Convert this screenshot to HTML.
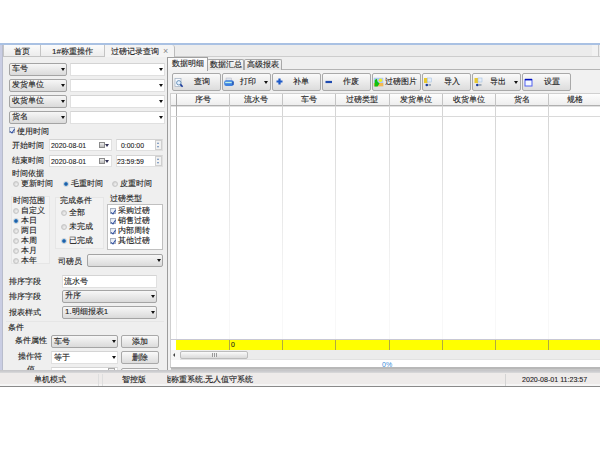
<!DOCTYPE html>
<html><head><meta charset="utf-8">
<style>
*{box-sizing:border-box;margin:0;padding:0}
html,body{width:600px;height:450px;overflow:hidden;background:#fff}
body{position:relative;font-family:"Liberation Sans",sans-serif;font-size:8px;color:#1a1a1a}
.a{position:absolute}
.t{position:absolute;white-space:nowrap;line-height:10px;font-size:8px;color:#1a1a1a;-webkit-text-stroke:0.12px #222}
.n{font-size:8px;letter-spacing:0;-webkit-text-stroke:0.1px #1a1a1a;transform:scaleX(0.86);transform-origin:0 0}
.combo{position:absolute;border:1px solid #a4a4a4;border-radius:2px;background:linear-gradient(#f7f7f7,#dadada)}
.inp{position:absolute;border:1px solid #e0e0e0;border-top-color:#d4d4d4;background:#fff}
.arr{position:absolute;width:0;height:0;border-left:2px solid transparent;border-right:2px solid transparent;border-top:3px solid #111}
.btn{position:absolute;border:1px solid #a9a9a9;border-radius:2px;background:linear-gradient(#fafafa,#dcdcdc)}
.rad{position:absolute;width:6px;height:6px;border-radius:50%;border:1px solid #c8c8c8;background:radial-gradient(circle at 60% 60%,#f0f0f0 0,#d8d8d8 2px,#c8c8c8 3px)}
.rad.on{border-color:#c8d0d8;background:radial-gradient(circle at 50% 50%,#1a4a90 0,#2a78c0 1.6px,#80b0d8 2.4px,#e0e8f0 3px)}
.chk{position:absolute;width:6px;height:6px;border:1px solid #a8b0c0;background:linear-gradient(135deg,#dfe6f2,#fafcff)}
.chk.on::after{content:"";position:absolute;left:1px;top:-0.5px;width:1.5px;height:3.5px;border-right:1px solid #3050a0;border-bottom:1px solid #3050a0;transform:rotate(35deg)}
.vl{position:absolute;width:1px;background:#b8b8b8}
.hl{position:absolute;height:1px;background:#b8b8b8}
</style></head><body>
<div class="a" style="left:0;top:43px;width:600px;height:2px;background:#a9c1e3"></div>
<div class="a" style="left:0;top:45px;width:3px;height:326px;background:linear-gradient(90deg,#c9cde3 0,#c9cde3 2px,#b8bccc 2px)"></div>
<div class="a" style="left:3px;top:45px;width:597px;height:12px;background:#ececec"></div>
<div class="a" style="left:175px;top:56px;width:425px;height:1px;background:#cdcdcd"></div>
<div class="a" style="left:592px;top:45px;width:6px;height:11px;background:#f2f2f2"></div>
<div class="a" style="left:598px;top:45px;width:1px;height:12px;background:#c8c8c8"></div>
<div class="a" style="left:3px;top:45px;width:38px;height:12px;background:linear-gradient(#fbfbfb,#ececec);border:1px solid #c4c4c4;border-top:none;border-radius:0 0 0 0"></div>
<div class="t" style="left:14px;top:47px;">首页</div>
<div class="a" style="left:41px;top:45px;width:64px;height:12px;background:linear-gradient(#fbfbfb,#ececec);border:1px solid #c4c4c4;border-top:none;border-left:none"></div>
<div class="t" style="left:52px;top:47px;">1#称重操作</div>
<div class="a" style="left:104px;top:45px;width:71px;height:13px;background:#f4f4f4;border-left:1px solid #c4c4c4;border-right:1px solid #bcbcbc;border-radius:0 3px 0 0"></div>
<div class="t" style="left:111px;top:47px;">过磅记录查询</div>
<div class="t" style="left:163px;top:46px;color:#888;font-size:9px;-webkit-text-stroke:0">×</div>
<div class="a" style="left:3px;top:57px;width:164px;height:314px;background:#efefef"></div>
<div class="a" style="left:6px;top:321px;width:158px;height:1px;background:#e6e6e6"></div>
<div class="combo" style="left:9px;top:63px;width:58px;height:13px"></div>
<div class="t" style="left:12px;top:64px;">车号</div>
<div class="arr" style="left:61px;top:68px"></div>
<div class="inp" style="left:70px;top:63px;width:95px;height:13px"></div>
<div class="arr" style="left:159px;top:68px"></div>
<div class="combo" style="left:9px;top:79px;width:58px;height:13px"></div>
<div class="t" style="left:12px;top:80px;">发货单位</div>
<div class="arr" style="left:61px;top:84px"></div>
<div class="inp" style="left:70px;top:79px;width:95px;height:13px"></div>
<div class="arr" style="left:159px;top:84px"></div>
<div class="combo" style="left:9px;top:95px;width:58px;height:13px"></div>
<div class="t" style="left:12px;top:96px;">收货单位</div>
<div class="arr" style="left:61px;top:100px"></div>
<div class="inp" style="left:70px;top:95px;width:95px;height:13px"></div>
<div class="arr" style="left:159px;top:100px"></div>
<div class="combo" style="left:9px;top:111px;width:58px;height:13px"></div>
<div class="t" style="left:12px;top:112px;">货名</div>
<div class="arr" style="left:61px;top:116px"></div>
<div class="inp" style="left:70px;top:111px;width:95px;height:13px"></div>
<div class="arr" style="left:159px;top:116px"></div>
<div class="chk on" style="left:9px;top:127px"></div>
<div class="t" style="left:17px;top:127px;">使用时间</div>
<div class="t" style="left:12px;top:141px;">开始时间</div>
<div class="inp" style="left:49px;top:139px;width:63px;height:12px"></div>
<div class="t n" style="left:51px;top:141px;">2020-08-01</div>
<div class="a" style="left:99px;top:142px;width:6px;height:6px;border:1px solid #8a8a8a;background:linear-gradient(#eee,#bbb)"></div>
<div class="arr" style="left:105px;top:144px;border-top-color:#335;border-left-width:2px;border-right-width:2px"></div>
<div class="inp" style="left:116px;top:139px;width:47px;height:12px"></div>
<div class="t n" style="left:121px;top:141px;">0:00:00</div>
<div class="a" style="left:155px;top:140px;width:7px;height:10px;background:#f2f2f2;border:1px solid #cfcfcf"></div>
<div class="arr" style="left:157px;top:146px;border-top:2px solid #6a8ab8;border-left-width:1.5px;border-right-width:1.5px"></div>
<div class="arr" style="left:157px;top:142px;border-top:none;border-bottom:2px solid #6a8ab8;border-left-width:1.5px;border-right-width:1.5px"></div>
<div class="t" style="left:12px;top:156px;">结束时间</div>
<div class="inp" style="left:49px;top:155px;width:63px;height:12px"></div>
<div class="t n" style="left:51px;top:157px;">2020-08-01</div>
<div class="a" style="left:99px;top:158px;width:6px;height:6px;border:1px solid #8a8a8a;background:linear-gradient(#eee,#bbb)"></div>
<div class="arr" style="left:105px;top:160px;border-top-color:#335;border-left-width:2px;border-right-width:2px"></div>
<div class="inp" style="left:116px;top:155px;width:47px;height:12px"></div>
<div class="t n" style="left:117px;top:157px;">23:59:59</div>
<div class="a" style="left:155px;top:156px;width:7px;height:10px;background:#f2f2f2;border:1px solid #cfcfcf"></div>
<div class="arr" style="left:157px;top:162px;border-top:2px solid #6a8ab8;border-left-width:1.5px;border-right-width:1.5px"></div>
<div class="arr" style="left:157px;top:158px;border-top:none;border-bottom:2px solid #6a8ab8;border-left-width:1.5px;border-right-width:1.5px"></div>
<div class="t" style="left:12px;top:169px;">时间依据</div>
<div class="rad" style="left:13px;top:181px"></div>
<div class="t" style="left:21px;top:179px;">更新时间</div>
<div class="rad on" style="left:63px;top:181px"></div>
<div class="t" style="left:71px;top:179px;">毛重时间</div>
<div class="rad" style="left:112px;top:181px"></div>
<div class="t" style="left:120px;top:179px;">皮重时间</div>
<div class="a" style="left:11px;top:196px;width:39px;height:68px;background:#f2f2f2;border:1px solid #e6e6e6"></div>
<div class="a" style="left:55px;top:197px;width:49px;height:52px;background:#f2f2f2;border:1px solid #e6e6e6"></div>
<div class="t" style="left:13px;top:196px;">时间范围</div>
<div class="rad" style="left:13px;top:208px"></div>
<div class="t" style="left:21px;top:206px;">自定义</div>
<div class="rad on" style="left:13px;top:218px"></div>
<div class="t" style="left:21px;top:216px;">本日</div>
<div class="rad" style="left:13px;top:228px"></div>
<div class="t" style="left:21px;top:226px;">两日</div>
<div class="rad" style="left:13px;top:238px"></div>
<div class="t" style="left:21px;top:236px;">本周</div>
<div class="rad" style="left:13px;top:248px"></div>
<div class="t" style="left:21px;top:246px;">本月</div>
<div class="rad" style="left:13px;top:258px"></div>
<div class="t" style="left:21px;top:256px;">本年</div>
<div class="t" style="left:60px;top:196px;">完成条件</div>
<div class="rad" style="left:61px;top:210px"></div>
<div class="t" style="left:69px;top:208px;">全部</div>
<div class="rad" style="left:61px;top:224px"></div>
<div class="t" style="left:69px;top:222px;">未完成</div>
<div class="rad on" style="left:61px;top:238px"></div>
<div class="t" style="left:69px;top:236px;">已完成</div>
<div class="t" style="left:110px;top:194px;">过磅类型</div>
<div class="a" style="left:107px;top:204px;width:56px;height:46px;background:#fff;border:1px solid #c0c0c0"></div>
<div class="chk on" style="left:110px;top:208px"></div>
<div class="t" style="left:118px;top:206px;">采购过磅</div>
<div class="chk on" style="left:110px;top:218px"></div>
<div class="t" style="left:118px;top:216px;">销售过磅</div>
<div class="chk on" style="left:110px;top:228px"></div>
<div class="t" style="left:118px;top:226px;">内部周转</div>
<div class="chk on" style="left:110px;top:238px"></div>
<div class="t" style="left:118px;top:236px;">其他过磅</div>
<div class="t" style="left:58px;top:257px;">司磅员</div>
<div class="combo" style="left:87px;top:254px;width:76px;height:13px"></div>
<div class="arr" style="left:157px;top:259px"></div>
<div class="t" style="left:9px;top:277px;">排序字段</div>
<div class="inp" style="left:62px;top:275px;width:95px;height:13px"></div>
<div class="t" style="left:64px;top:277px;">流水号</div>
<div class="t" style="left:9px;top:292px;">排序字段</div>
<div class="combo" style="left:62px;top:290px;width:95px;height:13px"></div>
<div class="t" style="left:65px;top:291px;">升序</div>
<div class="arr" style="left:151px;top:295px"></div>
<div class="t" style="left:9px;top:308px;">报表样式</div>
<div class="combo" style="left:62px;top:306px;width:95px;height:13px"></div>
<div class="t" style="left:65px;top:307px;">1.明细报表1</div>
<div class="arr" style="left:151px;top:311px"></div>
<div class="t" style="left:8px;top:323px;">条件</div>
<div class="t" style="left:15px;top:336px;">条件属性</div>
<div class="combo" style="left:51px;top:335px;width:67px;height:13px"></div>
<div class="arr" style="left:112px;top:340px"></div>
<div class="t" style="left:54px;top:337px;">车号</div>
<div class="btn" style="left:121px;top:335px;width:38px;height:13px"></div>
<div class="t" style="left:132px;top:337px;">添加</div>
<div class="t" style="left:18px;top:352px;">操作符</div>
<div class="inp" style="left:51px;top:351px;width:67px;height:13px"></div>
<div class="arr" style="left:112px;top:356px"></div>
<div class="t" style="left:54px;top:353px;">等于</div>
<div class="btn" style="left:121px;top:351px;width:38px;height:13px"></div>
<div class="t" style="left:132px;top:353px;">删除</div>
<div class="t" style="left:27px;top:365px;">值</div>
<div class="inp" style="left:51px;top:367px;width:67px;height:12px"></div>
<div class="a" style="left:108px;top:368px;width:7px;height:8px;border:1px solid #aaa;background:#f4f4f4"></div>
<div class="btn" style="left:121px;top:368px;width:38px;height:12px"></div>
<div class="a" style="left:167px;top:57px;width:433px;height:314px;background:#efefef"></div>
<div class="a" style="left:167px;top:69px;width:433px;height:301px;background:#f1f1f1;border-left:1px solid #9c9c9c;border-top:1px solid #b4b4b4"></div>
<div class="a" style="left:207px;top:59px;width:37px;height:11px;background:linear-gradient(#f6f6f6,#e2e2e2);border:1px solid #a8a8a8;border-bottom:none;border-radius:2px 2px 0 0"></div>
<div class="t" style="left:210px;top:60px;">数据汇总</div>
<div class="a" style="left:244px;top:59px;width:38px;height:11px;background:linear-gradient(#f6f6f6,#e2e2e2);border:1px solid #a8a8a8;border-bottom:none;border-radius:2px 2px 0 0"></div>
<div class="t" style="left:247px;top:60px;">高级报表</div>
<div class="a" style="left:167px;top:57px;width:41px;height:14px;background:linear-gradient(#fdfdfd,#f1f1f1);border:1px solid #a0a0a0;border-bottom:none;border-left-color:#9c9c9c"></div>
<div class="t" style="left:172px;top:59px;">数据明细</div>
<div class="btn" style="left:172px;top:73px;width:49px;height:18px"></div>
<div class="t" style="left:194px;top:77px;">查询</div>
<svg class="a" style="left:173px;top:76px" width="14" height="12" viewBox="0 0 14 12"><rect x="2" y="2.5" width="6" height="8" fill="#f8faff" stroke="#a0b0c0" stroke-width="0.7"/><circle cx="5.8" cy="6.8" r="2.2" fill="#e4f0ff" stroke="#5a88b0" stroke-width="0.9"/><path d="M7.4 8.4 L9.6 10.8" stroke="#1a3a9a" stroke-width="1.6"/></svg>
<div class="btn" style="left:222px;top:73px;width:49px;height:18px"></div>
<div class="t" style="left:240px;top:77px;">打印</div>
<div class="arr" style="left:264px;top:81px"></div>
<svg class="a" style="left:223px;top:76px" width="14" height="12" viewBox="0 0 14 12"><rect x="3" y="2" width="5.5" height="3" fill="#dde4ee" stroke="#aab" stroke-width="0.4"/><rect x="1.2" y="4.2" width="9.5" height="5.8" rx="2" fill="#3d80e0"/><rect x="2.2" y="5.8" width="6.5" height="1.4" fill="#bff0e4"/><path d="M10 5.5 v3.5" stroke="#1a3a90" stroke-width="0.9"/></svg>
<div class="btn" style="left:272px;top:73px;width:49px;height:18px"></div>
<div class="t" style="left:293px;top:77px;">补单</div>
<svg class="a" style="left:273px;top:76px" width="14" height="12" viewBox="0 0 14 12"><path d="M3.5 5.5 h6 M6.5 2.5 v6" stroke="#1e5ac8" stroke-width="2.2"/></svg>
<div class="btn" style="left:322px;top:73px;width:49px;height:18px"></div>
<div class="t" style="left:343px;top:77px;">作废</div>
<svg class="a" style="left:323px;top:76px" width="14" height="12" viewBox="0 0 14 12"><path d="M2.5 6 h6.5" stroke="#1e4ab0" stroke-width="2.2"/></svg>
<div class="btn" style="left:372px;top:73px;width:49px;height:18px"></div>
<div class="t" style="left:385px;top:77px;">过磅图片</div>
<svg class="a" style="left:373px;top:76px" width="14" height="12" viewBox="0 0 14 12"><rect x="0.8" y="1.8" width="9.5" height="8.5" fill="#b0ccf0"/><rect x="0.8" y="7" width="9.5" height="3.3" fill="#f4b850"/><circle cx="7.5" cy="4.2" r="1.7" fill="#f0f020"/><path d="M1.5 10.5 L1.8 4 L3.8 2.8 L4.5 5.5 L6.5 7.5 L4.5 10.5z" fill="#10c010"/></svg>
<div class="btn" style="left:422px;top:73px;width:49px;height:18px"></div>
<div class="t" style="left:444px;top:77px;">导入</div>
<svg class="a" style="left:423px;top:76px" width="14" height="12" viewBox="0 0 14 12"><rect x="1" y="2" width="3.5" height="5" fill="#e8c830"/><rect x="4.5" y="2" width="4" height="4" fill="#e4ecf8" stroke="#9bd" stroke-width="0.5"/><circle cx="3.8" cy="9" r="1.3" fill="#1a3a9a"/><rect x="5.5" y="8.2" width="2.5" height="1.5" fill="#8899aa"/></svg>
<div class="btn" style="left:472px;top:73px;width:49px;height:18px"></div>
<div class="t" style="left:490px;top:77px;">导出</div>
<div class="arr" style="left:514px;top:81px"></div>
<svg class="a" style="left:473px;top:76px" width="14" height="12" viewBox="0 0 14 12"><rect x="1.5" y="2" width="3.5" height="5" fill="#e8c830"/><rect x="5" y="2" width="4" height="4" fill="#e4ecf8" stroke="#9bd" stroke-width="0.5"/><circle cx="4.3" cy="9" r="1.3" fill="#1a3a9a"/><rect x="6" y="8.2" width="2.5" height="1.5" fill="#8899aa"/></svg>
<div class="btn" style="left:522px;top:73px;width:49px;height:18px"></div>
<div class="t" style="left:544px;top:77px;">设置</div>
<svg class="a" style="left:523px;top:76px" width="14" height="12" viewBox="0 0 14 12"><rect x="2" y="3.5" width="7" height="6.5" fill="#f4f8ff" stroke="#5060f0" stroke-width="1"/><rect x="2" y="2.8" width="7" height="1.6" fill="#0010c0"/></svg>
<div class="a" style="left:170px;top:93px;width:430px;height:275px;background:#fff;border-left:1px solid #cfcfcf;border-top:1px solid #d0d0d0;border-bottom:1px solid #b8b8b8"></div>
<div class="a" style="left:171px;top:94px;width:429px;height:12px;background:linear-gradient(#fdfdfd,#eeeeee);border-bottom:1px solid #b0b0b0;box-shadow:0 1px 0 #e0e0e0"></div>
<div class="vl" style="left:176px;top:94px;height:12px;background:#a8a8a8"></div>
<div class="vl" style="left:176px;top:106px;height:234px;background:linear-gradient(#b0b0b0,#d0d0d0 40%,#f0f0f0)"></div>
<div class="t" style="left:176px;width:53px;text-align:center;top:95px">序号</div>
<div class="vl" style="left:229px;top:94px;height:12px;background:#c4c4c4"></div>
<div class="vl" style="left:229px;top:106px;height:234px;background:linear-gradient(#d4d4d4,#e4e4e4 35%,#f8f8f8 80%)"></div>
<div class="t" style="left:229px;width:53px;text-align:center;top:95px">流水号</div>
<div class="vl" style="left:282px;top:94px;height:12px;background:#c4c4c4"></div>
<div class="vl" style="left:282px;top:106px;height:234px;background:linear-gradient(#d4d4d4,#e4e4e4 35%,#f8f8f8 80%)"></div>
<div class="t" style="left:282px;width:53px;text-align:center;top:95px">车号</div>
<div class="vl" style="left:335px;top:94px;height:12px;background:#c4c4c4"></div>
<div class="vl" style="left:335px;top:106px;height:234px;background:linear-gradient(#d4d4d4,#e4e4e4 35%,#f8f8f8 80%)"></div>
<div class="t" style="left:335px;width:54px;text-align:center;top:95px">过磅类型</div>
<div class="vl" style="left:389px;top:94px;height:12px;background:#c4c4c4"></div>
<div class="vl" style="left:389px;top:106px;height:234px;background:linear-gradient(#d4d4d4,#e4e4e4 35%,#f8f8f8 80%)"></div>
<div class="t" style="left:389px;width:53px;text-align:center;top:95px">发货单位</div>
<div class="vl" style="left:442px;top:94px;height:12px;background:#c4c4c4"></div>
<div class="vl" style="left:442px;top:106px;height:234px;background:linear-gradient(#d4d4d4,#e4e4e4 35%,#f8f8f8 80%)"></div>
<div class="t" style="left:442px;width:53px;text-align:center;top:95px">收货单位</div>
<div class="vl" style="left:495px;top:94px;height:12px;background:#c4c4c4"></div>
<div class="vl" style="left:495px;top:106px;height:234px;background:linear-gradient(#d4d4d4,#e4e4e4 35%,#f8f8f8 80%)"></div>
<div class="t" style="left:495px;width:53px;text-align:center;top:95px">货名</div>
<div class="vl" style="left:548px;top:94px;height:12px;background:#c4c4c4"></div>
<div class="vl" style="left:548px;top:106px;height:234px;background:linear-gradient(#d4d4d4,#e4e4e4 35%,#f8f8f8 80%)"></div>
<div class="t" style="left:548px;width:54px;text-align:center;top:95px">规格</div>
<div class="hl" style="left:171px;top:116px;width:429px;background:#dadada"></div>
<div class="a" style="left:171px;top:339px;width:429px;height:1px;background:#c8c8d4"></div>
<div class="a" style="left:176px;top:340px;width:424px;height:10px;background:#ffff00"></div>
<div class="vl" style="left:229px;top:340px;height:10px;background:#b0aa40"></div>
<div class="vl" style="left:282px;top:340px;height:10px;background:#b0aa40"></div>
<div class="vl" style="left:335px;top:340px;height:10px;background:#b0aa40"></div>
<div class="vl" style="left:389px;top:340px;height:10px;background:#b0aa40"></div>
<div class="vl" style="left:442px;top:340px;height:10px;background:#b0aa40"></div>
<div class="vl" style="left:495px;top:340px;height:10px;background:#b0aa40"></div>
<div class="vl" style="left:548px;top:340px;height:10px;background:#b0aa40"></div>
<div class="t n" style="left:231px;top:340px;">0</div>
<div class="a" style="left:171px;top:350px;width:429px;height:10px;background:#ececec;border-bottom:1px solid #e2e2e2"></div>
<div class="a" style="left:171px;top:350px;width:9px;height:10px;background:#f6f6f6"></div>
<div class="a" style="left:173px;top:353px;width:0;height:0;border-top:2px solid transparent;border-bottom:2px solid transparent;border-right:2.5px solid #444"></div>
<div class="a" style="left:180px;top:351px;width:68px;height:8px;background:linear-gradient(#fafafa,#dadada);border:1px solid #bcbcbc;border-radius:2px"></div>
<div class="a" style="left:212px;top:353px;width:5px;height:4px;background:linear-gradient(90deg,#999 0,#999 1px,#eee 1px,#eee 2px,#999 2px,#999 3px,#eee 3px,#eee 4px,#999 4px,#999 5px)"></div>
<div class="a" style="left:171px;top:361px;width:429px;height:6px;background:#fff"></div>
<div class="t" style="left:382px;top:360px;color:#3a8ad8;font-size:7px;-webkit-text-stroke:0">0%</div>
<div class="a" style="left:0;top:370px;width:600px;height:3px;background:linear-gradient(#c4c4c6,#d0d0d3 2px,#dcdcdc 3px)"></div>
<div class="a" style="left:171px;top:368px;width:429px;height:2px;background:linear-gradient(#b8b8b8 0,#b8b8b8 1px,#c8c8c8 1px)"></div>
<div class="a" style="left:0;top:373px;width:600px;height:14px;background:linear-gradient(#eeebea 0,#eeebea 11px,#f6f6f6 11px);border-bottom:1px solid #8a8a8a"></div>
<div class="t" style="left:34px;top:375px;">单机模式</div>
<div class="vl" style="left:98px;top:374px;height:12px;background:#dedede"></div>
<div class="vl" style="left:102px;top:374px;height:12px;background:#dedede"></div>
<div class="t" style="left:122px;top:375px;">智控版</div>
<div class="a" style="left:167px;top:374px;width:338px;height:12px;overflow:hidden"><div class="t" style="left:-4px;top:1px">能称重系统,无人值守系统</div></div>
<div class="vl" style="left:505px;top:374px;height:12px;background:#d4d4d4"></div>
<div class="t n" style="left:522px;top:375px;transform:scaleX(0.885)">2020-08-01 11:23:57</div>
</body></html>
